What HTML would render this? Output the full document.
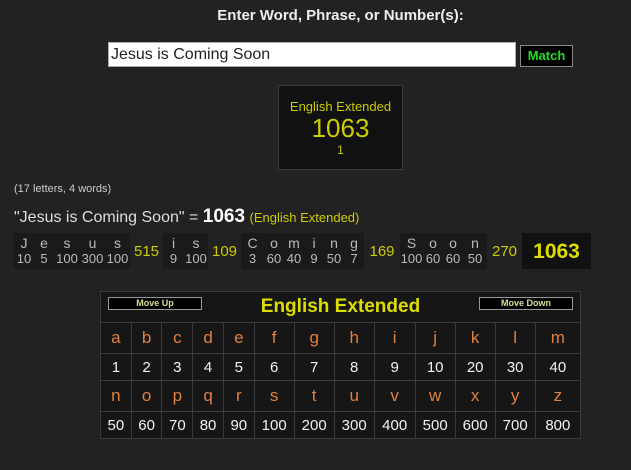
<!DOCTYPE html>
<html><head><style>
body{margin:0;width:631px;height:470px;background:#222;font-family:"Liberation Sans",Arial,sans-serif;position:relative;overflow:hidden;color:#ddd}
.a{position:absolute}
#bd{position:absolute;left:14px;top:233px;border-collapse:collapse;height:36px;table-layout:fixed;width:577px}
#bd td{padding:0;text-align:center;font-size:13px;line-height:15px;color:#bbb;background:#1a1a1a;white-space:nowrap}
#bd td.s{background:#222;color:#cc0;font-size:15px}
#bd td.t{background:#111;color:#dd0;font-size:21px;font-weight:bold}
#bd td span{display:block}
#bd td span.l{font-size:14px;color:#bbb}
#ct{position:absolute;left:100px;top:291px;width:481px;border-collapse:collapse;background:#161616}
#ct td{border:1px solid #3a3a3a;text-align:center;padding:0}
#ct tr.L td{color:#e0803f;font-size:17px;height:30px}
#ct tr.N td{color:#f2f2f2;font-size:15px;height:26px}
.btn{position:absolute;top:5px;height:11px;background:#000;border:1px solid #999;color:#dd9;font-size:9px;font-weight:bold;text-align:center;line-height:11px}
</style></head><body>
<div class="a" style="left:0;width:681px;top:7px;text-align:center;font-weight:bold;font-size:15px;color:#eee">Enter Word, Phrase, or Number(s):</div>
<div class="a" style="left:108px;top:42px;height:25px;background:#fff;border:1px solid #aaa;color:#222;font-size:16px;line-height:24px;padding-left:2px;box-sizing:border-box;width:408px">Jesus is Coming Soon</div>
<div class="a" style="left:520px;top:45px;width:51px;height:20px;background:#000;border:1px solid #888;color:#2d2;font-weight:bold;font-size:13px;line-height:20px;text-align:center">Match</div>
<div class="a" style="left:278px;top:85px;width:123px;height:83px;background:#111;border:1px solid #3a3a3a;text-align:center;color:#cc0">
<div style="margin-top:13px;font-size:13px">English Extended</div>
<div style="font-size:26px;line-height:29px">1063</div>
<div style="font-size:12px">1</div></div>
<div class="a" style="left:14px;top:183px;font-size:11px;color:#ccc">(17 letters, 4 words)</div>
<div class="a" style="left:14px;top:206px;font-size:16px;color:#ddd">"Jesus is Coming Soon" = <b style="font-size:19px;color:#fff">1063</b> <span style="font-size:13px;color:#cc0">(English Extended)</span></div>
<table id="bd"><tr>
<td style="width:20px"><span class="l">J</span>10</td><td style="width:20px"><span class="l">e</span>5</td><td style="width:26px"><span class="l">s</span>100</td><td style="width:25px"><span class="l">u</span>300</td><td style="width:25px"><span class="l">s</span>100</td><td class="s" style="width:33px">515</td>
<td style="width:21px"><span class="l">i</span>9</td><td style="width:24px"><span class="l">s</span>100</td><td class="s" style="width:33px">109</td>
<td style="width:23px"><span class="l">C</span>3</td><td style="width:20px"><span class="l">o</span>60</td><td style="width:20px"><span class="l">m</span>40</td><td style="width:20px"><span class="l">i</span>9</td><td style="width:20px"><span class="l">n</span>50</td><td style="width:20px"><span class="l">g</span>7</td><td class="s" style="width:36px">169</td>
<td style="width:23px"><span class="l">S</span>100</td><td style="width:20px"><span class="l">o</span>60</td><td style="width:20px"><span class="l">o</span>60</td><td style="width:24px"><span class="l">n</span>50</td><td class="s" style="width:35px">270</td><td class="t" style="width:69px">1063</td></tr></table>
<table id="ct">
<tr><td colspan="13" style="height:30px;position:relative;color:#dd0;font-weight:bold;font-size:19px">English Extended<div class="btn" style="left:7px;width:92px">Move Up</div><div class="btn" style="right:7px;width:92px">Move Down</div></td></tr>
<tr class="L"><td>a</td><td>b</td><td>c</td><td>d</td><td>e</td><td style="width:39px">f</td><td style="width:39px">g</td><td style="width:39px">h</td><td style="width:40px">i</td><td style="width:39px">j</td><td style="width:39px">k</td><td style="width:39px">l</td><td>m</td></tr>
<tr class="N"><td>1</td><td>2</td><td>3</td><td>4</td><td>5</td><td>6</td><td>7</td><td>8</td><td>9</td><td>10</td><td>20</td><td>30</td><td>40</td></tr>
<tr class="L"><td>n</td><td>o</td><td>p</td><td>q</td><td>r</td><td>s</td><td>t</td><td>u</td><td>v</td><td>w</td><td>x</td><td>y</td><td>z</td></tr>
<tr class="N"><td>50</td><td>60</td><td>70</td><td>80</td><td>90</td><td>100</td><td>200</td><td>300</td><td>400</td><td>500</td><td>600</td><td>700</td><td>800</td></tr>
</table>
</body></html>
